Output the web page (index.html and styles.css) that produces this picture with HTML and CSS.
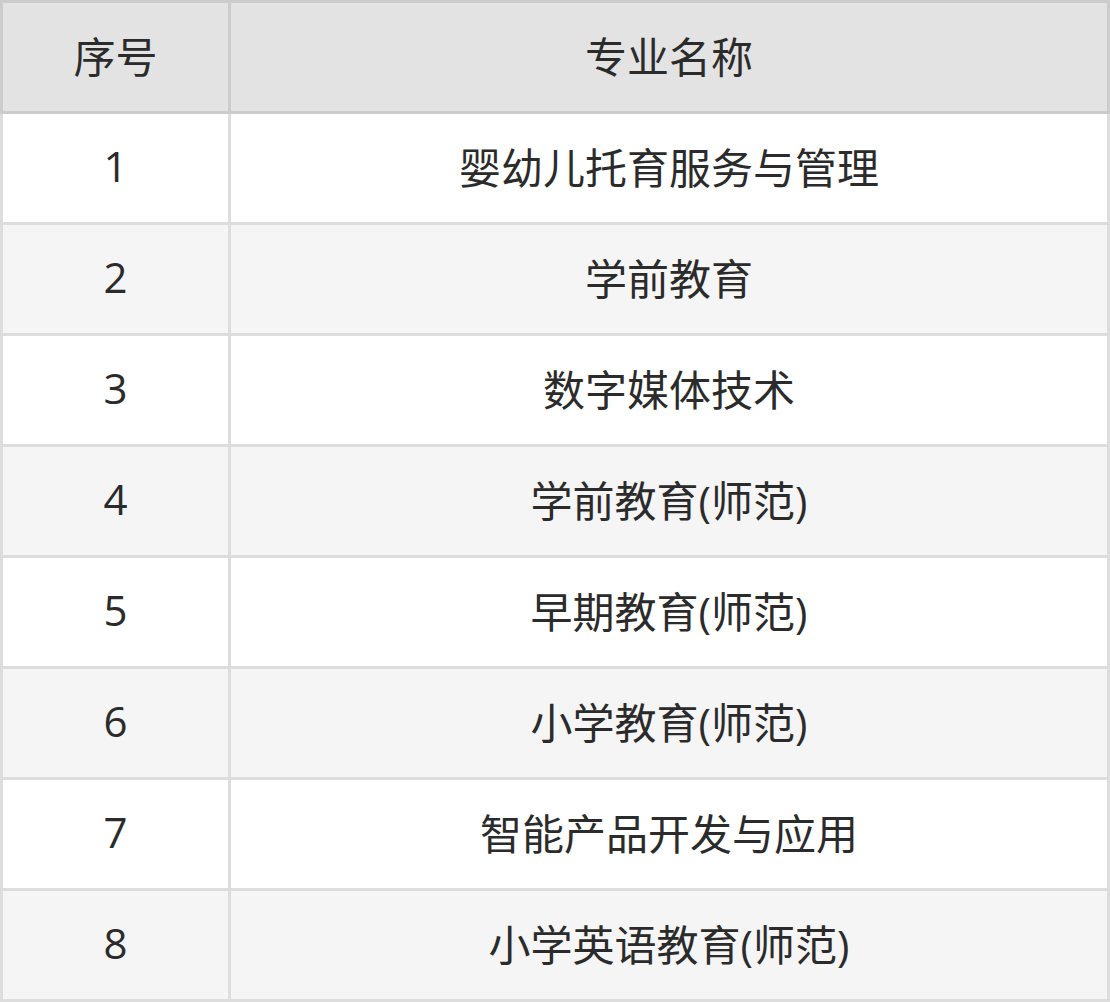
FILE: index.html
```html
<!DOCTYPE html>
<html lang="zh-CN">
<head>
<meta charset="utf-8">
<title>专业名称</title>
<link rel="stylesheet" href="styles.css">
</head>
<body>
<table class="majors">
  <thead>
    <tr><th class="col-no">序号</th><th class="col-name">专业名称</th></tr>
  </thead>
  <tbody>
    <tr><td>1</td><td>婴幼儿托育服务与管理</td></tr>
    <tr><td>2</td><td>学前教育</td></tr>
    <tr><td>3</td><td>数字媒体技术</td></tr>
    <tr><td>4</td><td>学前教育(师范)</td></tr>
    <tr><td>5</td><td>早期教育(师范)</td></tr>
    <tr><td>6</td><td>小学教育(师范)</td></tr>
    <tr><td>7</td><td>智能产品开发与应用</td></tr>
    <tr><td>8</td><td>小学英语教育(师范)</td></tr>
  </tbody>
</table>
</body>
</html>
```

FILE: styles.css
```css
html, body {
  margin: 0;
  padding: 0;
  background: #ffffff;
}
.majors {
  border-collapse: collapse;
  width: 1110px;
  table-layout: fixed;
  font-family: "Open Sans", "Noto Sans CJK SC", sans-serif;
  font-size: 42px;
  color: #2b2b2b;
}
.majors th,
.majors td {
  height: 103px;
  padding: 0 0 5px;
  text-align: center;
  vertical-align: middle;
  border: 3px solid #dddddd;
  box-sizing: content-box;
}
.majors th {
  font-weight: normal;
  background: #e3e3e3;
  border-color: #cccccc;
}
.majors .col-no {
  width: 225px;
}
.majors tbody tr:nth-child(odd) td {
  background: #ffffff;
}
.majors tbody tr:nth-child(even) td {
  background: #f5f5f5;
}
```
